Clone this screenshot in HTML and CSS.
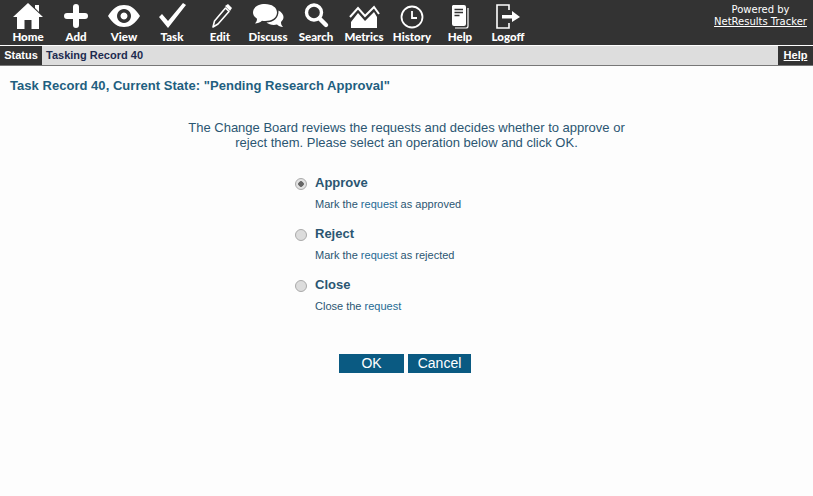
FILE: index.html
```html
<!DOCTYPE html>
<html lang="en">
<head>
<meta charset="utf-8">
<title>Task Record 40</title>
<link rel="stylesheet" href="styles.css">
</head>
<body>
<header class="topbar">
  <nav class="nav">
    <a class="nav-item"><svg class="ico" viewBox="0 0 32 28"><path d="M16 1 L31 15 L27 15 L27 27 L19.500 27 L19.500 18 L12.500 18 L12.500 27 L5 27 L5 15 L1 15 Z M23 3 h4 v7 l-4 -4 Z" fill="#fff"/></svg><span>Home</span></a>
    <a class="nav-item"><svg class="ico" viewBox="0 0 32 28"><path d="M13 5 a3 3 0 0 1 6 0 V11 H25 a3 3 0 0 1 0 6 H19 V23 a3 3 0 0 1 -6 0 V17 H7 a3 3 0 0 1 0 -6 H13 Z" fill="#fff"/></svg><span>Add</span></a>
    <a class="nav-item"><svg class="ico" viewBox="0 0 32 28"><path fill-rule="evenodd" d="M0 14 C5 6 10 3 16 3 S27 6 32 14 C27 22 22 25 16 25 S5 22 0 14 Z M16 7 a7 7 0 1 0 0.010 0 Z M16 10.500 a3.500 3.500 0 1 1 -0.010 0 Z" fill="#fff"/></svg><span>View</span></a>
    <a class="nav-item"><svg class="ico" viewBox="0 0 32 28"><path d="M3 15 L6 12 L12 19 L27 1 L30 3 L12 26 Z" fill="#fff"/></svg><span>Task</span></a>
    <a class="nav-item"><svg class="ico" viewBox="0 0 32 28"><path d="M21.500 6 L25 9.500 L14 22 L9 25 L10.500 19 Z" fill="none" stroke="#fff" stroke-width="1.600" stroke-linejoin="round"/><path d="M21 4 L24 2 L28 6 L26 9 Z" fill="#fff"/></svg><span>Edit</span></a>
    <a class="nav-item"><svg class="ico" viewBox="0 0 32 28"><path d="M13 2 C20 2 25 5.500 25 10.500 C25 15.500 20 19 13 19 C12 19 11 19 10 18.800 C8 20.500 5.500 21.500 3 21.500 C4.500 20 5 18.500 5 16.800 C2.500 15 1 13 1 10.500 C1 5.500 6 2 13 2 Z" fill="#fff"/><path d="M26.500 8.500 C29.500 10 31.500 12.500 31.500 15 C31.500 17 30.500 18.500 29 20 C29 22 29.500 23.500 31 25 C28.500 25 26.500 24 25 22.500 C21 23.500 17 22.500 14.500 20.500 C21 20.500 27 16.500 26.500 8.500 Z" fill="#fff"/></svg><span>Discuss</span></a>
    <a class="nav-item"><svg class="ico" viewBox="0 0 32 28"><circle cx="14" cy="10.500" r="7.500" fill="none" stroke="#fff" stroke-width="3.400"/><path d="M19.500 16.500 L26 23" stroke="#fff" stroke-width="4.400" stroke-linecap="round"/></svg><span>Search</span></a>
    <a class="nav-item"><svg class="ico" viewBox="0 0 32 28"><path d="M2 15 L10 6 L17 14 L26 5 L31 12" fill="none" stroke="#fff" stroke-width="2"/><path d="M3 26 V20 L10 11 L17 19 L26 10 L29 15 V26 Z" fill="#fff"/></svg><span>Metrics</span></a>
    <a class="nav-item"><svg class="ico" viewBox="0 0 32 28"><circle cx="16" cy="15" r="10.500" fill="none" stroke="#fff" stroke-width="1.800"/><path d="M16 9 V16 H21" fill="none" stroke="#fff" stroke-width="1.800"/></svg><span>History</span></a>
    <a class="nav-item"><svg class="ico" viewBox="0 0 32 28"><path d="M9 3 H20 a2 2 0 0 1 2 2 V22 a2 2 0 0 1 -2 2 H10 a2 2 0 0 1 -2 -2 V4 Z" fill="#fff"/><path d="M10.500 7.500 H19 M10.500 10.500 H19 M10.500 13.500 H15.500" stroke="#333" stroke-width="1.400"/><path d="M24 6 V24 a2 2 0 0 1 -2 2 H11" fill="none" stroke="#fff" stroke-width="1.200"/></svg><span>Help</span></a>
    <a class="nav-item"><svg class="ico" viewBox="0 0 32 28"><path d="M17 8 V3 H5 V26 H17 V21" fill="none" stroke="#fff" stroke-width="1.600"/><path d="M10 13 H20 V9 L28 15 L20 20 V16.500 H10 Z" fill="#fff"/></svg><span>Logoff</span></a>
  </nav>
  <div class="powered">
    <div>Powered by</div>
    <a class="powered-link">NetResults Tracker</a>
  </div>
</header>
<div class="statusbar">
  <div class="status-label">Status</div>
  <div class="status-title">Tasking Record 40</div>
  <a class="status-help">Help</a>
</div>
<main class="content">
  <h1 class="page-title">Task Record 40, Current State: "Pending Research Approval"</h1>
  <p class="intro">The Change Board reviews the requests and decides whether to approve or<br>reject them. Please select an operation below and click OK.</p>
  <form class="options">
    <div class="option">
      <input class="radio" type="radio" name="op" checked>
      <div class="option-text"><div class="option-name">Approve</div><div class="option-desc">Mark the <a class="term">request</a> as approved</div></div>
    </div>
    <div class="option">
      <input class="radio" type="radio" name="op">
      <div class="option-text"><div class="option-name">Reject</div><div class="option-desc">Mark the <a class="term">request</a> as rejected</div></div>
    </div>
    <div class="option">
      <input class="radio" type="radio" name="op">
      <div class="option-text"><div class="option-name">Close</div><div class="option-desc">Close the <a class="term">request</a></div></div>
    </div>
  </form>
  <div class="actions">
    <button class="btn btn-ok" type="button">OK</button>
    <button class="btn btn-cancel" type="button">Cancel</button>
  </div>
</main>
</body>
</html>
```
FILE: styles.css
```css
* { box-sizing: border-box; }
html, body { margin: 0; padding: 0; }
body { background: #fdfdfd; font-family: "Liberation Sans", Arial, sans-serif; color: #2b5672; height: 496px; overflow: hidden; }
.topbar { height: 45px; background: #333; display: flex; justify-content: space-between; }
.nav { display: flex; padding-left: 4px; }
.nav-item { width: 48px; display: flex; flex-direction: column; align-items: center; color: #fff; font-family: "Lato", sans-serif; font-weight: 900; font-size: 11.500px; line-height: 14px; }
.ico { width: 32px; height: 28px; margin-top: 2px; margin-bottom: 0; flex: none; }
.powered { width: 107px; padding-top: 4px; padding-left: 2px; text-align: center; color: #fff; font-family: "DejaVu Sans", sans-serif; font-size: 10px; line-height: 12px; }
.powered-link { text-decoration: underline; display: block; white-space: nowrap; }
.statusbar { height: 21px; background: #ddd; border-top: 1px solid #fff; border-bottom: 1px solid #777; display: flex; align-items: stretch; font-size: 11px; font-weight: 700; line-height: 19px; }
.status-label { width: 42px; background: #333; color: #fff; text-align: center; }
.status-title { color: #1d2b50; padding-left: 4px; flex: 1; }
.status-help { width: 35px; background: #333; color: #fff; text-align: center; text-decoration: underline; }
.content { display: block; }
.page-title { margin: 0; padding: 12px 0 0 10px; font-size: 13px; line-height: 16px; font-weight: 700; color: #1f5f80; letter-spacing: 0.035px; }
.intro { margin: 0; padding-top: 26px; text-align: center; font-size: 13px; line-height: 15px; color: #2b5672; width: 813px; }
.options { margin-top: 25px; padding-left: 295px; display: flex; flex-direction: column; gap: 11px; }
.option { display: flex; height: 40px; }
.radio { appearance: none; width: 12px; height: 12px; margin: 3px 8px 0 0; border-radius: 50%; background: #dcdcdc; border: 1px solid #aaa; flex: none; }
.radio:checked { background: radial-gradient(circle, #666 0 2.500px, #e2e2e2 3px); }
.option-name { font-size: 13px; font-weight: 700; line-height: 16px; color: #2b5672; }
.option-desc { font-size: 11px; line-height: 14px; margin-top: 6px; color: #2b5672; }
.term { color: #1f6a94; }
.actions { margin-top: 37px; padding-left: 339px; display: flex; gap: 4px; }
.btn { height: 19px; border: 0; padding: 0; background: #0a5a82; color: #fff; font-family: "Liberation Sans", Arial, sans-serif; font-size: 14px; line-height: 19px; }
.btn-ok { width: 65px; }
.btn-cancel { width: 63px; }
```
